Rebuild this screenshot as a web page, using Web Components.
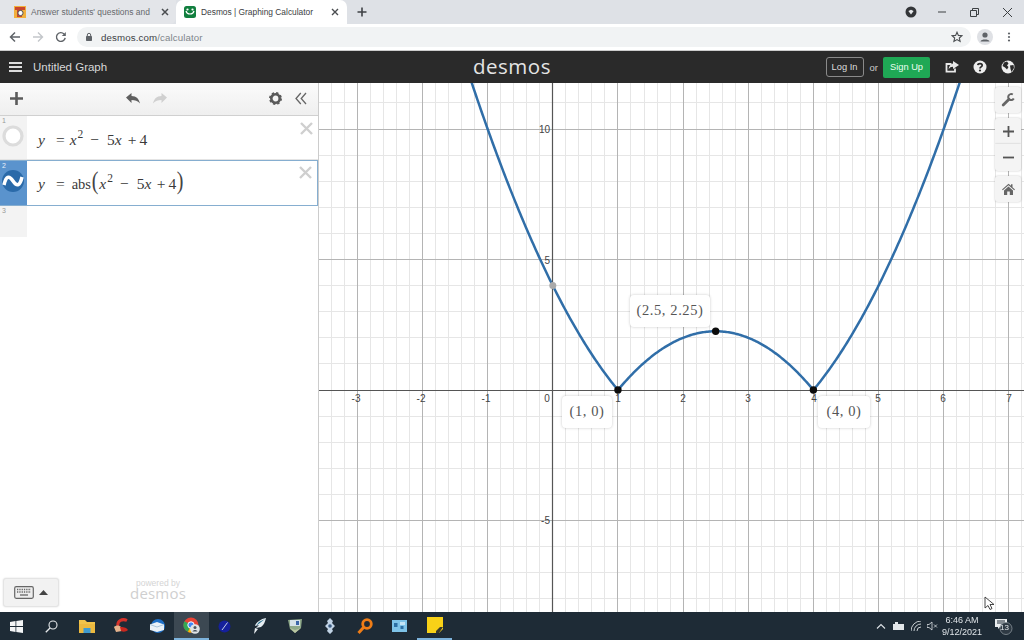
<!DOCTYPE html>
<html><head><meta charset="utf-8"><title>Desmos</title>
<style>
html,body{margin:0;padding:0;width:1024px;height:640px;overflow:hidden;background:#fff;font-family:"Liberation Sans",Arial,sans-serif}
desktop-app{display:flex;flex-direction:column;width:1024px;height:640px;filter:blur(.3px)}
</style></head><body>
<desktop-app></desktop-app>
<script>
function comp(name, html, init){
  customElements.define(name, class extends HTMLElement{
    constructor(){super();this.attachShadow({mode:'open'}).innerHTML=html;}
    connectedCallback(){ if(init) init(this); }
  });
}
comp('tab-strip',`<style>
:host{display:flex;height:24px;background:#dee1e6;align-items:stretch;font:8.4px "Liberation Sans",Arial,sans-serif;color:#55585c;flex:none}
.t{display:flex;align-items:center;box-sizing:border-box}
.one{width:176px;padding-left:14px;background:#e3e5e9;border-radius:0 0 6px 0}
.two{width:171px;padding-left:8px;background:#fff;border-radius:7px 7px 0 0;color:#3c4043}
.ttl{margin-left:5px;white-space:nowrap}
.one .ttl{width:129px;color:#66696d;font-size:8.450px}.two .ttl{width:129px;font-size:8.400px;margin-left:5px}
.x{display:block;flex:none}
.plus{margin-left:9px;align-self:center}
.r{margin-left:auto;display:flex;align-items:center}
</style>
<div class="t one"><svg width="12" height="12" viewBox="0 0 12 12"><rect width="12" height="12" fill="#f2b03c"/><path d="M1 1h10v3H8v7H3V4H1z" fill="#c9472f"/><circle cx="6.500" cy="7" r="2.600" fill="#fff" stroke="#555"/></svg><span class="ttl">Answer students' questions and</span><svg class="x" width="10" height="10" viewBox="0 0 10 10"><path d="M2 2l6 6M8 2l-6 6" stroke="#4a4d50" stroke-width="1.500"/></svg></div>
<div class="t two"><svg width="12" height="12" viewBox="0 0 12 12"><rect width="12" height="12" rx="2.500" fill="#127f3f"/><path d="M2 5c1 4 7 4 8 0" fill="none" stroke="#fff" stroke-width="1.200"/><circle cx="3.500" cy="3.500" r="1.100" fill="#fff"/><circle cx="8.500" cy="3.500" r="1.100" fill="#fff"/></svg><span class="ttl">Desmos | Graphing Calculator</span><svg class="x" width="10" height="10" viewBox="0 0 10 10"><path d="M2 2l6 6M8 2l-6 6" stroke="#4a4d50" stroke-width="1.400"/></svg></div>
<svg class="plus" width="12" height="12" viewBox="0 0 12 12"><path d="M6 1.500v9M1.500 6h9" stroke="#3f4246" stroke-width="1.600"/></svg>
<div class="r">
<svg style="margin-right:20px" width="12" height="12" viewBox="0 0 12 12"><circle cx="6" cy="6" r="5.500" fill="#333538"/><path d="M3.400 5 6 8.400 8.600 5 6 3.800z" fill="#e8eaed"/></svg>
<svg style="margin-right:22px" width="10" height="10" viewBox="0 0 10 10"><path d="M1 5h8" stroke="#3c4043" stroke-width="1"/></svg>
<svg style="margin-right:22px" width="11" height="11" viewBox="0 0 11 11"><path d="M1.500 3.500h6v6h-6zM3.500 3.500v-2h6v6h-2" fill="none" stroke="#3c4043"/></svg>
<svg style="margin-right:11px" width="11" height="11" viewBox="0 0 11 11"><path d="M1 1l9 9M10 1l-9 9" stroke="#3c4043"/></svg>
</div>`);
comp('nav-bar',`<style>
:host{display:flex;height:27px;background:#fff;align-items:center;flex:none;box-sizing:border-box;padding-bottom:1px;font:10px "Liberation Sans",Arial,sans-serif}
svg{display:block;flex:none}
.omni{margin-left:10px;width:894px;height:20px;border-radius:10px;background:#f1f3f4;display:flex;align-items:center;padding-left:8px;box-sizing:border-box;color:#80868b;font-size:9.700px;letter-spacing:.12px}
.omni b{font-weight:400;color:#3c4043;margin-left:8px}
.star{margin-left:auto;margin-right:8px}
</style>
<svg style="margin-left:9px" width="12" height="12" viewBox="0 0 12 12"><path d="M11 6H2M6 1.500 1.500 6 6 10.500" fill="none" stroke="#5f6368" stroke-width="1.500"/></svg>
<svg style="margin-left:11px" width="12" height="12" viewBox="0 0 12 12"><path d="M1 6h9M6 1.500 10.500 6 6 10.500" fill="none" stroke="#c3c6ca" stroke-width="1.400"/></svg>
<svg style="margin-left:11px" width="12" height="12" viewBox="0 0 12 12"><path d="M10.200 6.800A4.400 4.400 0 1 1 9 2.900" fill="none" stroke="#5f6368" stroke-width="1.400"/><path d="M10.800 1v4h-4z" fill="#5f6368"/></svg>
<div class="omni"><svg width="8" height="10" viewBox="0 0 8 10"><rect x="1" y="4" width="6" height="5" rx=".7" fill="#5f6368"/><path d="M2.300 4.500V3a1.700 1.700 0 0 1 3.400 0v1.500" fill="none" stroke="#5f6368"/></svg><b>desmos.com</b>/calculator<svg class="star" width="12" height="12" viewBox="0 0 12 12"><path d="M6 1.200l1.400 3.200 3.500.3-2.600 2.300.8 3.400L6 8.600 2.900 10.400l.8-3.400L1.100 4.700l3.500-.3z" fill="none" stroke="#4a4d50" stroke-width="1.100"/></svg></div>
<svg style="margin-left:6px" width="16" height="16" viewBox="0 0 16 16"><circle cx="8" cy="8" r="8" fill="#dfe1e5"/><circle cx="8" cy="6" r="2.600" fill="#5f6368"/><path d="M3.500 12.500c.6-2.600 8.400-2.600 9 0z" fill="#5f6368"/></svg>
<svg style="margin-left:13px" width="6" height="12" viewBox="0 0 6 12"><g fill="#5f6368"><circle cx="3" cy="2.500" r="1.100"/><circle cx="3" cy="6" r="1.100"/><circle cx="3" cy="9.500" r="1.100"/></g></svg>`);
comp('calc-header',`<style>
:host{display:grid;grid-template-columns:1fr auto 1fr;height:32px;background:#2a2a2a;border-top:1px solid #ccc;box-sizing:content-box;align-items:center;color:#ddd;flex:none;font:13px "Liberation Sans",Arial,sans-serif;margin-top:-1px}
.l{display:flex;align-items:center;padding-left:9px}
.l span{margin-left:11px;font-size:11.500px;color:#d8d8d8}
.logo{font:20.500px "Open Sans","DejaVu Sans",sans-serif;color:#e4e4e4;letter-spacing:.5px;line-height:1;padding-bottom:2px}
.rr{display:flex;align-items:center;justify-content:flex-end}
.login{box-sizing:border-box;width:38px;height:20px;border:1px solid #8a8a8a;border-radius:3px;font-size:9.300px;display:flex;align-items:center;justify-content:center;color:#ddd}
.or{font-size:9.500px;margin:0 5px 0 6px;color:#ccc}
.signup{width:47px;height:21px;background:#1fa855;border-radius:2px;color:#eafff1;font-size:9.300px;display:flex;align-items:center;justify-content:center}
svg{display:block}
</style>
<div class="l"><svg width="13" height="12" viewBox="0 0 13 12"><path d="M0 2h13M0 6h13M0 10h13" stroke="#ddd" stroke-width="2"/></svg><span>Untitled Graph</span></div>
<div class="logo">desmos</div>
<div class="rr"><div class="login">Log In</div><div class="or">or</div><div class="signup">Sign Up</div>
<svg style="margin-left:15px" width="14" height="13" viewBox="0 0 14 13"><path d="M10 7.500v3.200H1.500V3h5" fill="none" stroke="#e8e8e8" stroke-width="1.800"/><path d="M8 0l6 4-6 4V5.800C6 5.800 4.600 6.500 3.600 8.500 3.800 5 5.500 2.800 8 2.400z" fill="#e8e8e8"/></svg>
<svg style="margin-left:14px" width="14" height="14" viewBox="0 0 14 14"><circle cx="7" cy="7" r="6.500" fill="#eee"/><path d="M4.800 5.200C5 3 9.200 3 9.200 5.300 9.200 6.900 7 6.800 7 8.400" fill="none" stroke="#2a2a2a" stroke-width="1.700"/><circle cx="7" cy="10.500" r="1.100" fill="#2a2a2a"/></svg>
<svg style="margin:0 9px 0 14px" width="14" height="14" viewBox="0 0 14 14"><circle cx="7" cy="7" r="6.500" fill="#eee"/><path d="M3 2.500 6 1.500 7.500 3.500 6 5.500 7.500 7 6 9.500 4 7.500 1.500 6zM9 5.500l3.500-.5.500 3-2.500 4L9.500 9z" fill="#2a2a2a"/></svg></div>`);
comp('expr-row',`<style>
:host{display:flex;box-sizing:border-box;border-bottom:1px solid #e4e4e4;background:#fff;flex:none;position:relative}
.g{width:27px;flex:none;background:#f3f3f3;font:7px "Liberation Sans",Arial,sans-serif;color:#999;box-sizing:border-box;padding:1px 0 0 2px;display:flex;flex-direction:column}
.ic{align-self:center;margin-top:1px;margin-left:-3px;display:flex}
.body{flex:1;min-width:0;padding-left:11px;display:flex;align-items:center}
.x{flex:none;margin:6px 5px 0 0;align-self:flex-start}
:host([active]){border:1.500px solid #86aed0;border-left:0}
:host([active]) .x{margin-top:5px}
:host([active]) .g{background:#5a93cd;color:#e8f1fa}
</style>
<div class="g"><span class="n"></span><div class="ic"><slot name="icon"></slot></div></div>
<div class="body"><slot></slot></div>
<svg class="x" width="13" height="13" viewBox="0 0 13 13"><path d="M1 1l11 11M12 1 1 12" stroke="#cfcfcf" stroke-width="2.400"/></svg>`,
el=>{el.shadowRoot.querySelector('.n').textContent=el.getAttribute('n');
 if(el.hasAttribute('blank')) el.shadowRoot.querySelector('.x').style.display='none';});
comp('calc-sidebar',`<style>
:host{display:flex;flex-direction:column;width:319px;box-sizing:border-box;border-right:1px solid #ccc;background:#fff;flex:none;position:relative}
.bar{height:33px;flex:none;box-sizing:border-box;border-bottom:1px solid #d0d0d0;background:linear-gradient(#fbfbfb,#efefef);display:flex;align-items:center}
.bar svg{display:block;flex:none}
.m{font:15.500px/1 "Liberation Serif","Times New Roman",serif;color:#3a3a3a;white-space:nowrap;display:flex;align-items:baseline}
.m i{font-style:italic}
.m sup{font-size:11.500px;line-height:0;position:relative;top:-7px;vertical-align:baseline}
.par{font-size:25px;font-weight:400;line-height:0;color:#444;transform:scaleX(.8)}
.abs{font-size:14.500px}
.wm{margin-top:auto;height:34px;flex:none;display:flex;padding:0 0 5px 3px;align-items:flex-end}
.kb{box-sizing:border-box;width:56px;height:29px;background:#f2f2f2;border:1px solid #e4e4e4;border-radius:3px;box-shadow:0 0 2px #ddd;display:flex;align-items:center;justify-content:center;gap:5px}
.pw{margin-left:71px;width:56px;text-align:center;color:#d4d4d4;font:8.500px/9px "Liberation Sans",Arial,sans-serif;align-self:flex-end;padding-bottom:7px}
.pw b{display:block;margin-top:-2px;font:400 15px/14px "Open Sans","DejaVu Sans",sans-serif;color:#cfcfcf;letter-spacing:.2px}
</style>
<div class="bar" style="padding-bottom:1px">
<svg style="margin-left:10px" width="13" height="13" viewBox="0 0 13 13"><path d="M6.500 0v13M0 6.500h13" stroke="#5b5b5b" stroke-width="2.600"/></svg>
<svg style="margin-left:103px" width="14" height="11" viewBox="0 0 14 11"><path d="M0 4.500 5.500 0v3C10.500 3 13 6 14 10.500 11.500 7.800 9 7 5.500 7v3z" fill="#606060"/></svg>
<svg style="margin-left:13px" width="14" height="11" viewBox="0 0 14 11"><path d="M14 4.500 8.500 0v3C3.500 3 1 6 0 10.500 2.500 7.800 5 7 8.500 7v3z" fill="#d0d0d0"/></svg>
<svg style="margin-left:102px" width="13" height="13" viewBox="0 0 13 13"><circle cx="6.500" cy="6.500" r="4.200" fill="none" stroke="#5b5b5b" stroke-width="2.600"/><circle cx="6.500" cy="6.500" r="5.300" fill="none" stroke="#5b5b5b" stroke-width="2.400" stroke-dasharray="2.200 1.960"/></svg>
<svg style="margin-left:13px" width="12" height="13" viewBox="0 0 12 13"><path d="M5.800 1 1 6.500 5.800 12M11 1 6.200 6.500 11 12" fill="none" stroke="#666" stroke-width="1.300"/></svg>
</div>
<expr-row n="1" style="height:44px"><svg slot="icon" width="22" height="22" viewBox="0 0 22 22"><circle cx="11" cy="11" r="9" fill="#fff" stroke="#dcdcdc" stroke-width="3.200"/></svg>
<div class="m" style="padding-top:4px"><i>y</i><span style="margin-left:11px">=</span><i style="margin-left:5px">x</i><sup style="margin-left:1px">2</sup><span style="margin-left:7px">−</span><span style="margin-left:8px">5</span><i>x</i><span style="margin-left:6px">+</span><span style="margin-left:3px">4</span></div></expr-row>
<expr-row n="2" active style="height:46px"><svg slot="icon" width="24" height="24" viewBox="0 0 24 24" style="margin-top:-1px"><circle cx="12" cy="12" r="11" fill="#2a6aa9"/><path d="M3 16C5 7 8 6 12 12S19 17 21 8" fill="none" stroke="#fff" stroke-width="3.500"/></svg>
<div class="m" style="padding-top:2px"><i>y</i><span style="margin-left:11px">=</span><span class="abs" style="margin-left:7px">abs</span><span class="par">(</span><i>x</i><sup style="margin-left:1px">2</sup><span style="margin-left:7px">−</span><span style="margin-left:8px">5</span><i>x</i><span style="margin-left:5.500px">+</span><span style="margin-left:3px">4</span><span class="par">)</span></div></expr-row>
<expr-row n="3" blank style="height:31px;border-bottom:0"></expr-row>
<div class="wm"><div class="kb"><svg width="20" height="13" viewBox="0 0 20 13"><rect x=".7" y=".7" width="18.600" height="11.600" rx="1.500" fill="#eee" stroke="#666" stroke-width="1.200"/><path d="M3 3.500h14M3 6h14" stroke="#666" stroke-width="1.300" stroke-dasharray="1.300 1"/><path d="M6 9h8" stroke="#666" stroke-width="1.300"/></svg><svg width="9" height="5" viewBox="0 0 9 5"><path d="M4.500 0 9 5H0z" fill="#444"/></svg></div>
<div class="pw">powered by<b>desmos</b></div></div>`);
comp('graph-callout',`<style>
:host{position:absolute;box-sizing:border-box;height:32px;padding-bottom:2px;background:#fff;border-radius:4px;box-shadow:0 0 3px rgba(0,0,0,.22);display:flex;align-items:center;justify-content:center;font:14.500px "Liberation Serif","Times New Roman",serif;color:#555;letter-spacing:.6px;white-space:nowrap}
</style><slot></slot>`);
comp('zoom-controls',`<style>
:host{position:absolute;right:3px;top:4px;width:26px;display:flex;flex-direction:column}
.b{width:26px;background:#f4f4f4;border-radius:3px;box-shadow:0 0 2px rgba(0,0,0,.25);display:flex;align-items:center;justify-content:center;box-sizing:border-box}
svg{display:block}
</style>
<div class="b" style="height:26px"><svg width="14" height="14" viewBox="0 0 14 14"><path d="M2.200 12 8 6.200" stroke="#666" stroke-width="2.800" stroke-linecap="round"/><path d="M11.800 1.500A3 3 0 1 0 12.800 5.600" fill="none" stroke="#666" stroke-width="2"/></svg></div>
<div class="b" style="height:26px;margin-top:5px;border-radius:3px 3px 0 0"><svg width="11" height="11" viewBox="0 0 11 11"><path d="M5.500 0v11M0 5.500h11" stroke="#555" stroke-width="1.800"/></svg></div>
<div class="b" style="height:27px;border-radius:0 0 3px 3px"><svg width="11" height="3" viewBox="0 0 11 3"><path d="M0 1.500h11" stroke="#555" stroke-width="1.800"/></svg></div>
<div class="b" style="height:26px;margin-top:5px"><svg width="13" height="12" viewBox="0 0 13 12"><path d="M6.500 .8 0 6.500l.8.8 5.700-5 5.700 5 .8-.8-2.500-2.200V1.200H9v1.500zM2 7.600 6.500 3.600 11 7.600V12H7.800V8.500H5.200V12H2z" fill="#666"/></svg></div>`);
comp('graph-paper',`<style>
:host{display:block;flex:1;position:relative;overflow:hidden;background:#fff;min-width:0}
svg.g{display:block;position:absolute;left:0;top:0}
text{font:10px "Liberation Sans",Arial,sans-serif;fill:#444}
.cur{position:absolute;left:665px;top:513px}
</style>
<svg class="g" width="705" height="529" viewBox="0 0 705 529"></svg>
<graph-callout style="left:311px;top:212px;width:80px">(2.5, 2.25)</graph-callout>
<graph-callout style="left:243px;top:313px;width:50px">(1, 0)</graph-callout>
<graph-callout style="left:499px;top:313px;width:52px">(4, 0)</graph-callout>
<zoom-controls></zoom-controls>
<svg class="cur" width="12" height="15" viewBox="0 0 12 15"><path d="M1 1v11l3-2.500 2 4 2-1-2-4h4z" fill="#fff" stroke="#333" stroke-width=".9"/></svg>`,
el=>{
 const s=el.shadowRoot.querySelector('svg.g');const ox=233.8,oy=307,ux=65.15,uy=26.1,W=705,H=529;
 const X=v=>ox+v*ux,Y=v=>oy-v*uy,pix=v=>Math.round(v-.5)+.5;let h='';
 for(let i=-20;i<=40;i++){if(i%5===0)continue;const x=pix(X(i/5));if(x>=0&&x<=W)h+=`<path d="M${x} 0V${H}" stroke="#e6e6e6"/>`;}
 for(let i=-10;i<=12;i++){if(i%5===0)continue;const y=pix(Y(i));h+=`<path d="M0 ${y}H${W}" stroke="#e6e6e6"/>`;}
 for(let i=-3;i<=7;i++){if(i===0)continue;const x=pix(X(i));h+=`<path d="M${x} 0V${H}" stroke="#b4b4b4"/>`;}
 [-5,5,10].forEach(i=>{const y=pix(Y(i));h+=`<path d="M0 ${y}H${W}" stroke="#b4b4b4"/>`;});
 h+=`<path d="M${pix(X(0))} 0V${H}" stroke="#555" stroke-width="1.200"/><path d="M0 ${pix(Y(0))}H${W}" stroke="#555" stroke-width="1.200"/>`;
 [[-3,37],[-2,102],[-1,167],[1,299],[2,364],[3,429],[4,495],[5,559],[6,624],[7,690]].forEach(([t,x])=>{h+=`<text x="${x}" y="319" text-anchor="middle">${t}</text>`;});
 h+=`<text x="228" y="319" text-anchor="middle">0</text>`;
 [[10,50],[5,181],[-5,441]].forEach(([t,y])=>{h+=`<text x="231" y="${y}" text-anchor="end">${t}</text>`;});
 let d='';for(let x=-1.7;x<=6.7;x+=.02){const v=Math.abs(x*x-5*x+4);d+=(d?'L':'M')+X(x).toFixed(2)+' '+Y(v).toFixed(2);}
 h+=`<path d="${d}" fill="none" stroke="#306ea8" stroke-width="2.500" stroke-linejoin="round"/>`;
 h+=`<circle cx="${X(0)}" cy="${Y(4)}" r="3.500" fill="#aaa"/>`;
 [[1,0],[4,0],[2.5,2.25]].forEach(([a,b])=>{h+=`<circle cx="${X(a)}" cy="${Y(b)}" r="3.700" fill="#0c0c0c"/>`;});
 s.innerHTML=h;
});
comp('task-bar',`<style>
:host{display:flex;height:28px;background:#1e2b36;flex:none;align-items:center;color:#dfe4e8;font:9px/12px "Liberation Sans",Arial,sans-serif}
.i{width:35px;height:28px;flex:none;display:flex;align-items:center;justify-content:center;box-sizing:border-box}
.on{background:#3c4852;border-bottom:2px solid #7db3dc}
.u{border-bottom:2px solid #7db3dc}
svg{display:block;flex:none}
.tray{margin-left:auto;display:flex;align-items:center}
.clk{width:42px;text-align:center;margin:0 12px 0 3px}
</style>
<div class="i" style="margin-left:-1px"><svg width="13" height="13" viewBox="0 0 13 13"><path d="M0 1.900 5.500 1.100V6H0zM6.300 1 13 0v6H6.300zM0 7h5.500v4.900L0 11.100zM6.300 7H13v6l-6.700-1z" fill="#f3f5f6"/></svg></div>
<div class="i"><svg width="13" height="13" viewBox="0 0 13 13"><circle cx="8" cy="5" r="4" fill="none" stroke="#e6e9eb" stroke-width="1.100"/><path d="M5 8 .8 12.200" stroke="#e6e9eb" stroke-width="1.300"/></svg></div>
<div class="i"><svg width="16" height="13" viewBox="0 0 16 13"><path d="M0 0h6l2 2h8v11H0z" fill="#f1c34a"/><rect x="0" y="4" width="16" height="9" fill="#ecb93f"/><rect x="4.500" y="8" width="7" height="5" fill="#3f9bd0"/></svg></div>
<div class="i"><svg width="17" height="16" viewBox="0 0 17 16"><path d="M14 2.500C9 .2 4 3 5 8" fill="none" stroke="#d6322a" stroke-width="3"/><path d="M1 9c2-2 5-2 7 0l1 4-6 1z" fill="#e6b48e"/><path d="M7 9c3 0 6 0 8 3-2 2-5 2-7 1z" fill="#c8271f"/></svg></div>
<div class="i"><svg width="16" height="16" viewBox="0 0 16 16"><circle cx="9" cy="8" r="7" fill="#1d6fc7"/><path d="M1 6.500 8 4l7 2.500V12L8 14 1 12z" fill="#e9f1f8"/><path d="M1 6.500 8 9l7-2.500" fill="none" stroke="#a8c4dc"/></svg></div>
<div class="i on"><svg width="17" height="17" viewBox="0 0 17 17"><circle cx="8" cy="8" r="7.500" fill="#ea4335"/><path d="M8 8 1.500 4.200A7.500 7.500 0 0 0 5 15z" fill="#34a853"/><path d="M8 8 5 15A7.500 7.500 0 0 0 15 10z" fill="#fbbc05"/><circle cx="8" cy="8" r="3.200" fill="#4285f4" stroke="#fff"/><circle cx="12" cy="12" r="4.800" fill="#dfe3e6"/><circle cx="12" cy="10.600" r="1.500" fill="#4d5761"/><path d="M9.500 14.500c.5-2 4.500-2 5 0z" fill="#4d5761"/></svg></div>
<div class="i" style="margin-left:-2px"><svg width="13" height="13" viewBox="0 0 13 13"><circle cx="6.500" cy="6.500" r="6" fill="#15209c"/><path d="M4 10 9.500 2.500" stroke="#d8e4f0" stroke-width=".9"/></svg></div>
<div class="i"><svg width="14" height="17" viewBox="0 0 14 17"><path d="M13 0C8 1 3 4 2 8l4-1-3 3 5-1C11 7 12 4 13 0z" fill="#e6edf2"/><path d="M12 1 6 4 3 8z" fill="#28708f"/><path d="M2 10 1 16l4-5z" fill="#e9eef2"/></svg></div>
<div class="i"><svg width="16" height="16" viewBox="0 0 16 16"><path d="M1 2 15 1l-1 9-6 5-5-4z" fill="#8fa98a"/><path d="M3 2h10v6H3z" fill="#d6e2e8"/><path d="M9 3h3v4H9z" fill="#3c66a8"/><path d="M3 10l5 5 6-5-6 2z" fill="#b8c4a0"/></svg></div>
<div class="i"><svg width="10" height="16" viewBox="0 0 10 16"><path d="M5 0 8 3 7 5l3 3-3 3 1 2-3 3-3-3 1-2-3-3 3-3-1-2z" fill="#c2d4e6"/><circle cx="5" cy="8" r="1.800" fill="#3a5a80"/></svg></div>
<div class="i"><svg width="16" height="17" viewBox="0 0 16 17"><circle cx="10" cy="6" r="4.300" fill="none" stroke="#ef7d17" stroke-width="2.800"/><path d="M6.500 9.500 1.500 15" stroke="#ef7d17" stroke-width="3"/></svg></div>
<div class="i"><svg width="15" height="12" viewBox="0 0 15 12"><rect width="15" height="12" fill="#7ec3e8"/><rect x="2" y="3" width="3.500" height="4" fill="#2c6fa3"/><rect x="8" y="2" width="5" height="3" fill="#c4e4f5"/><rect x="8.500" y="6" width="3" height="3" fill="#2c6fa3"/></svg></div>
<div class="i u"><svg width="16" height="16" viewBox="0 0 16 16"><path d="M0 0h16v12l-4 4H0z" fill="#f8d117"/><path d="M9 14l4-4h3l-4 6H9z" fill="#3a3a2a"/></svg></div>
<div class="tray">
<svg width="10" height="6" viewBox="0 0 10 6"><path d="M1 5.500l4-4 4 4" fill="none" stroke="#dde2e6" stroke-width="1.100"/></svg>
<svg style="margin-left:7px" width="12" height="9" viewBox="0 0 12 9"><rect x="0" y="2" width="11" height="6" fill="#e2e6e9"/><rect x="2" y="0" width="3" height="3" fill="#e2e6e9"/></svg>
<svg style="margin-left:6px" width="11" height="10" viewBox="0 0 11 10"><path d="M0 10A10 10 0 0 1 10 0M3 10a7 7 0 0 1 7-7M6 10a4 4 0 0 1 4-4" fill="none" stroke="#c5cbcf"/></svg>
<svg style="margin-left:5px" width="11" height="10" viewBox="0 0 11 10"><path d="M0 3.500h2L5 1v8L2 6.500H0z" fill="none" stroke="#dde2e6" stroke-width=".8"/><path d="M7 3.500l3 3M10 3.500l-3 3" stroke="#dde2e6" stroke-width=".8"/></svg>
<div class="clk">6:46 AM<br>9/12/2021</div>
<svg style="margin-right:11px" width="18" height="17" viewBox="0 0 18 17"><path d="M0 1h12v8H5l-2 2V9H0z" fill="#e9ecee"/><path d="M2 3h8M2 5h8" stroke="#1e2b36"/><circle cx="11" cy="10.500" r="6" fill="#2f3a44" stroke="#8a949b" stroke-width=".8"/></svg>
<span style="margin-left:-28px;margin-right:11px;font-size:8px;width:17px;text-align:center;position:relative;top:2px">13</span>
</div>`);
comp('desktop-app',`<style>
:host{display:flex;flex-direction:column;width:1024px;height:640px;overflow:hidden}
.main{display:flex;flex:1;min-height:0}
</style>
<tab-strip></tab-strip><nav-bar></nav-bar><calc-header></calc-header>
<div class="main"><calc-sidebar></calc-sidebar><graph-paper></graph-paper></div>
<task-bar></task-bar>`);
</script>
</body></html>
